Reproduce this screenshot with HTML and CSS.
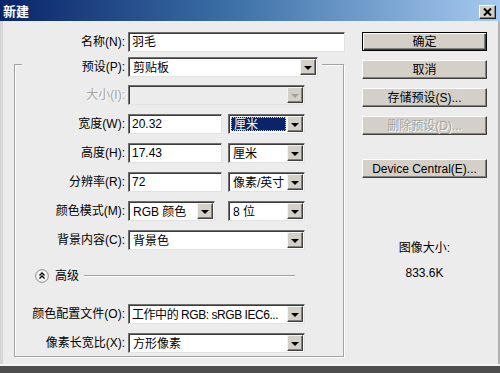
FILE: index.html
```html
<!DOCTYPE html>
<html lang="zh-CN">
<head>
<meta charset="utf-8">
<title>新建</title>
<link rel="stylesheet" href="styles.css">
</head>
<body>
<div class="win">
  <div class="titlebar">
    <div class="title-text">新建</div>
    <div class="xbox"><svg class="xicon" width="9" height="8" viewBox="0 0 9 8"><path d="M1 0.5 L8 7.5 M8 0.5 L1 7.5" stroke="#000" stroke-width="2"/></svg></div>
  </div>
  <div class="main">
    <div class="left">
      <div class="row">
        <span class="lbl lbl-top">名称(N):</span>
        <div class="field w-name">羽毛</div>
      </div>
      <fieldset class="group">
        <legend class="legend">
          <div class="row">
            <span class="lbl lbl-legend">预设(P):</span>
            <div class="sel w-preset"><span class="val">剪贴板</span><span class="arr"></span></div>
          </div>
        </legend>
        <div class="row first">
          <span class="lbl lbl-in disabled">大小(I):</span>
          <div class="sel sel-dis w-wide"><span class="val"></span><span class="arr arr-dis"></span></div>
        </div>
        <div class="row gap">
          <span class="lbl lbl-in">宽度(W):</span>
          <div class="field w-num">20.32</div>
          <div class="sel w-unit ml6"><span class="val val-hi">厘米</span><span class="arr"></span></div>
        </div>
        <div class="row gap">
          <span class="lbl lbl-in">高度(H):</span>
          <div class="field w-num">17.43</div>
          <div class="sel w-unit ml6"><span class="val">厘米</span><span class="arr"></span></div>
        </div>
        <div class="row gap">
          <span class="lbl lbl-in">分辨率(R):</span>
          <div class="field w-num">72</div>
          <div class="sel w-unit ml6"><span class="val">像素/英寸</span><span class="arr"></span></div>
        </div>
        <div class="row gap">
          <span class="lbl lbl-in">颜色模式(M):</span>
          <div class="sel w-mode"><span class="val">RGB 颜色</span><span class="arr"></span></div>
          <div class="sel w-unit ml13"><span class="val">8 位</span><span class="arr"></span></div>
        </div>
        <div class="row gap">
          <span class="lbl lbl-in">背景内容(C):</span>
          <div class="sel w-wide"><span class="val">背景色</span><span class="arr"></span></div>
        </div>
        <div class="row adv">
          <span class="adv-icon">
            <svg width="14" height="14" viewBox="0 0 14 14"><circle cx="7" cy="7" r="6.3" fill="#f4f4f4" stroke="#8a8a8a"/><path d="M4.5 6.5 L7 4 L9.5 6.5 M4.5 9.5 L7 7 L9.5 9.5" fill="none" stroke="#000" stroke-width="1.3"/></svg>
          </span>
          <span class="adv-text">高级</span>
          <span class="adv-line"></span>
        </div>
        <div class="row prof">
          <span class="lbl lbl-in">颜色配置文件(O):</span>
          <div class="sel w-wide"><span class="val val-tight">工作中的 RGB: sRGB IEC6...</span><span class="arr"></span></div>
        </div>
        <div class="row gap">
          <span class="lbl lbl-in">像素长宽比(X):</span>
          <div class="sel w-wide"><span class="val">方形像素</span><span class="arr"></span></div>
        </div>
      </fieldset>
    </div>
    <div class="right">
      <div class="btn btn-default">确定</div>
      <div class="btn">取消</div>
      <div class="btn">存储预设(S)...</div>
      <div class="btn disabled">删除预设(D)...</div>
      <div class="btn btn-device">Device Central(E)...</div>
      <div class="size-label">图像大小:</div>
      <div class="size-value">833.6K</div>
    </div>
  </div>
</div>
</body>
</html>
```

FILE: styles.css
```css
* { box-sizing: border-box; }
html, body { margin: 0; padding: 0; }
body {
  width: 500px;
  height: 373px;
  overflow: hidden;
  background: #4e4e4e;
  font-family: "Liberation Sans", "Noto Sans CJK SC", sans-serif;
  font-size: 12px;
  line-height: 14px;
  color: #000;
}
.win {
  width: 500px;
  height: 366px;
  background: #ececec;
  display: flex;
  flex-direction: column;
  border-bottom: 2px solid #f6f6f6;
}
.titlebar {
  position: relative;
  height: 21px;
  flex: none;
  background: linear-gradient(to right, #0a246a 0%, #3a6ea5 45%, #a6caf0 100%);
  padding: 2px 0 0 3px;
}
.title-text {
  color: #fff;
  font-weight: bold;
  font-size: 13px;
  line-height: 17px;
  font-family: "Noto Sans CJK SC", sans-serif;
}
.xbox {
  position: absolute;
  top: 5px;
  right: 4px;
  width: 17px;
  height: 14px;
  background: #d4d0c8;
  border: 1px solid;
  border-color: #ffffff #202020 #202020 #ffffff;
  box-shadow: inset -1px -1px 0 #808080;
}
.xicon {
  position: absolute;
  left: 3px;
  top: 2px;
}
.main {
  flex: 1;
  display: flex;
  padding-top: 11px;
  box-shadow: inset 3px 0 0 #d6d6d6, inset -2px 0 0 #b0b0b0;
}
.left { width: 345px; flex: none; }
.right {
  width: 125px;
  margin-left: 17px;
  display: flex;
  flex-direction: column;
  align-items: center;
}
.row {
  display: flex;
  align-items: center;
  height: 20px;
}
.lbl {
  flex: none;
  text-align: right;
  margin-right: 3px;
  white-space: nowrap;
}
.lbl-top { width: 125px; }
.lbl-in { width: 110px; }
.lbl-legend { width: 103px; }
.disabled { color: #a3a3a3; text-shadow: 1px 1px 0 #fff; }

.field, .sel {
  height: 20px;
  background: #fff;
  border: 1px solid;
  border-color: #6f6f6f #e2e2e2 #e2e2e2 #6f6f6f;
  box-shadow: inset 1px 1px 0 #3c3c3c;
  flex: none;
}
.field {
  padding: 2px 0 0 3px;
  white-space: nowrap;
}
.sel {
  display: flex;
  align-items: stretch;
  padding: 1px 1px 1px 1px;
}
.val {
  flex: 1;
  min-width: 0;
  padding: 2px 0 0 3px;
  white-space: nowrap;
  overflow: hidden;
}
.val-tight { letter-spacing: -0.45px; padding-left: 2px; }
.val-hi {
  background: #0a246a;
  color: #fff;
  outline: 1px dotted #c8c8c8;
  outline-offset: -1px;
  margin: 1px 1px 1px 1px;
  padding: 1px 0 0 3px;
}
.arr {
  width: 16px;
  flex: none;
  background: #d4d0c8;
  border: 1px solid;
  border-color: #f4f4f4 #404040 #404040 #f4f4f4;
  box-shadow: inset -1px -1px 0 #808080;
  display: flex;
  align-items: center;
  justify-content: center;
}
.arr::after {
  content: "";
  display: block;
  width: 0;
  height: 0;
  margin-top: 1px;
  border-top: 4px solid #000;
  border-left: 4px solid transparent;
  border-right: 4px solid transparent;
}
.arr-dis::after { border-top-color: #a0a0a0; }
.sel-dis { background: #ececec; }

.w-name { width: 217px; }
.w-preset { width: 190px; }
.w-wide { width: 177px; }
.w-num { width: 94px; }
.w-unit { width: 77px; }
.w-mode { width: 87px; }
.ml6 { margin-left: 6px; }
.ml13 { margin-left: 13px; }

.group {
  margin: 5px 0 0 14px;
  width: 330px;
  padding: 0 0 3px 0;
  border: 1px solid #a2a2a2;
  box-shadow: 1px 1px 0 #fff, inset 1px 1px 0 #fff;
  min-width: 0;
}
.legend {
  margin-left: 7px;
  padding: 0 4px 0 0;
  height: 14px;
  background: #ececec;
}
.legend .row { align-items: flex-start; }
.legend .lbl { line-height: 20px; }

.first { margin-top: 14px; }
.gap { margin-top: 9px; }
.adv { margin-top: 16px; }
.prof { margin-top: 18px; }

.adv-icon {
  margin-left: 20px;
  width: 14px;
  height: 14px;
  display: flex;
}
.adv-text { margin-left: 6px; }
.adv-line {
  flex: 1;
  margin: 0 48px 0 5px;
  height: 2px;
  border-top: 1px solid #a2a2a2;
  border-bottom: 1px solid #fff;
}

.btn {
  width: 125px;
  height: 19px;
  flex: none;
  margin-bottom: 9px;
  background: #d4d0c8;
  border: 1px solid;
  border-color: #fff #404040 #404040 #fff;
  box-shadow: inset -1px -1px 0 #808080;
  text-align: center;
  padding-top: 2px;
  white-space: nowrap;
}
.btn-default {
  border: 1px solid #000;
  box-shadow: inset 1px 1px 0 #fff, inset -1px -1px 0 #404040, inset -2px -2px 0 #808080;
}
.btn-device { margin-top: 15px; }
.size-label { margin-top: 54px; }
.size-value { margin-top: 11px; }
```
